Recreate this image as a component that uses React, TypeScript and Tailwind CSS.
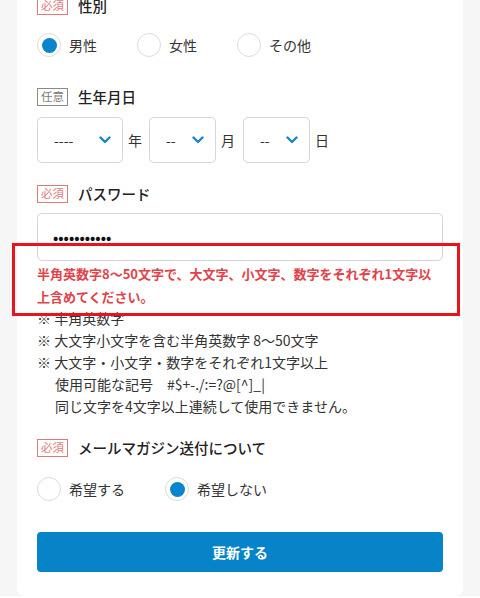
import React from "react";

const font = { fontFamily: '"Noto Sans CJK JP", "Noto Sans", sans-serif' };

function Badge({ req }: { req: boolean }) {
  return req ? (
    <span className="inline-flex h-[18px] items-center border border-[#e07a7a] px-[3px] text-[11.5px] leading-none text-[#e07a7a]">
      必須
    </span>
  ) : (
    <span className="inline-flex h-[18px] items-center border border-[#8a8a8a] px-[3px] text-[11.5px] leading-none text-[#7a7a7a]">
      任意
    </span>
  );
}

function Label({ req, text }: { req: boolean; text: string }) {
  return (
    <div className="flex h-[18px] items-center gap-[10px]">
      <Badge req={req} />
      <span className="text-[14.5px] font-medium text-[#222]">{text}</span>
    </div>
  );
}

function Radio({ checked, label, w }: { checked?: boolean; label: string; w: string }) {
  return (
    <div className={`flex items-center gap-[8px] ${w}`}>
      <span className="flex h-[24px] w-[24px] items-center justify-center rounded-full border border-[#dcdcdc] bg-white">
        {checked && <span className="h-[15px] w-[15px] rounded-full bg-[#0a84cc]" />}
      </span>
      <span className="text-[14px] text-[#333]">{label}</span>
    </div>
  );
}

function Chevron() {
  return (
    <svg width="12" height="8" viewBox="0 0 12 8" fill="none">
      <path d="M1.5 1.5 L6 6 L10.5 1.5" stroke="#1a84c4" strokeWidth="2.4" strokeLinecap="round" strokeLinejoin="round" />
    </svg>
  );
}

function Select({ text, w }: { text: string; w: string }) {
  return (
    <div className={`flex h-[46px] items-center justify-between rounded-[5px] border border-[#d6d6d6] bg-white pl-[16px] pr-[11px] ${w}`}>
      <span className="text-[14px] text-[#333]">{text}</span>
      <Chevron />
    </div>
  );
}

export default function App() {
  return (
    <div className="min-h-[598px] bg-[#f6f6f6]" style={font}>
      <div className="relative ml-[17px] w-[446px] rounded-b-[8px] bg-white px-[20px] pb-[24px]">
        <div className="-mt-[3px] pt-0">
          <Label req text="性別" />
        </div>
        <div className="mt-[18px] flex">
          <Radio checked label="男性" w="w-[100px]" />
          <Radio label="女性" w="w-[100px]" />
          <Radio label="その他" w="w-[100px]" />
        </div>

        <div className="mt-[31px]">
          <Label req={false} text="生年月日" />
        </div>
        <div className="mt-[11px] flex items-center text-[14px] text-[#333]">
          <Select text="----" w="w-[86px]" />
          <span className="ml-[5px] w-[21px]">年</span>
          <Select text="--" w="w-[67px]" />
          <span className="ml-[5px] w-[22px]">月</span>
          <Select text="--" w="w-[67px]" />
          <span className="ml-[5px]">日</span>
        </div>

        <div className="mt-[22px]">
          <Label req text="パスワード" />
        </div>
        <div className="mt-[10px] flex h-[48px] items-center rounded-[5px] border border-[#d6d6d6] pl-[15px]">
          <span className="text-[14px] font-bold tracking-[0px] text-[#111]">•••••••••••</span>
        </div>
        <div className="mt-[1px] text-[13px] font-bold leading-[23px] text-[#e2434a]">
          半角英数字8〜50文字で、大文字、小文字、数字をそれぞれ1文字以
          <br />
          上含めてください。
        </div>
        <div className="-mt-[1px] text-[14px] leading-[22px] text-[#333]">
          <div>※ 半角英数字</div>
          <div>※ 大文字小文字を含む半角英数字 8〜50文字</div>
          <div>※ 大文字・小文字・数字をそれぞれ1文字以上</div>
          <div className="pl-[18px]">使用可能な記号　#$+-./:=?@[^]_|</div>
          <div className="pl-[18px]">同じ文字を4文字以上連続して使用できません。</div>
        </div>

        <div className="mt-[22px]">
          <Label req text="メールマガジン送付について" />
        </div>
        <div className="mt-[20px] flex">
          <Radio label="希望する" w="w-[128px]" />
          <Radio checked label="希望しない" w="w-[128px]" />
        </div>

        <button className="mt-[31px] flex h-[40px] w-full items-center justify-center rounded-[4px] bg-[#0784c8] text-[14px] font-bold text-white">
          更新する
        </button>

        <div className="pointer-events-none absolute left-[-5px] top-[246px] h-[73px] w-[448px] border-[3px] border-[#e8141c]" />
      </div>
    </div>
  );
}
